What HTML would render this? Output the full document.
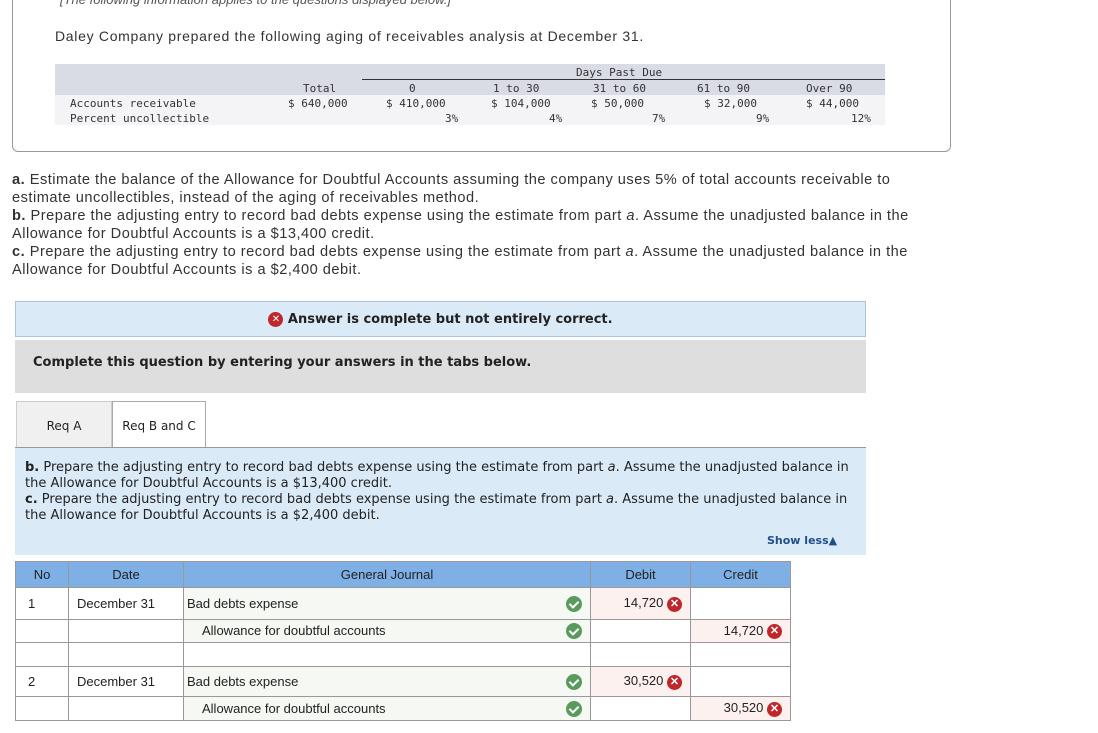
<!DOCTYPE html>
<html><head><style>
body{margin:0;width:1098px;height:733px;background:#fff;position:relative;font-family:"Liberation Sans",sans-serif;color:#222;overflow:hidden}
.abs{position:absolute}
.mono{font-family:"DejaVu Sans Mono","Liberation Mono",monospace;font-size:11px;color:#333}
.dv{font-family:"DejaVu Sans",sans-serif}
.x{display:inline-block;width:15px;height:15px;border-radius:50%;background:#c0272d;color:#fff;font-size:11px;line-height:15px;text-align:center;font-weight:bold;vertical-align:middle}
.ok{display:inline-block;width:16px;height:16px;border-radius:50%;background:#5a9a5c;vertical-align:middle;position:relative}
.ok:after{content:"";position:absolute;left:5px;top:3px;width:4px;height:7px;border:solid #fff;border-width:0 2px 2px 0;transform:rotate(45deg)}
table.j{border-collapse:collapse;font-size:13px;table-layout:fixed}
table.j td{border:1px solid #999;padding:0 8px}
table.j th{border:1px solid #999;background:#7eb0e6;font-weight:normal;font-size:13px;height:25px;padding:0}
.g{background:#f5f8f3}
.p{background:#fdf1f0;text-align:right}
</style></head><body>
<div class="abs" style="left:12px;top:-10px;width:937px;height:160px;border:1px solid #999;border-radius:0 0 6px 6px"></div>
<div class="abs" style="left:60px;top:-8px;font-size:13px;color:#555;font-style:italic">[The following information applies to the questions displayed below.]</div>
<div class="abs" style="left:55px;top:28px;font-size:14px;color:#333;letter-spacing:0.7px">Daley Company prepared the following aging of receivables analysis at December 31.</div>
<div class="abs" style="left:55px;top:64px;width:830px;height:31px;background:#d9dce5"></div>
<div class="abs" style="left:55px;top:95px;width:830px;height:30px;background:#f4f4f6"></div>
<div class="abs" style="left:362px;top:79px;width:523px;height:1px;background:#333"></div>
<div class="abs mono" style="left:576px;top:66px">Days Past Due</div>
<div class="abs mono" style="left:0;top:82px;width:1000px">
<span class="abs" style="left:303px">Total</span><span class="abs" style="left:409px">0</span><span class="abs" style="left:493px">1 to 30</span><span class="abs" style="left:593px">31 to 60</span><span class="abs" style="left:697px">61 to 90</span><span class="abs" style="left:806px">Over 90</span></div>
<div class="abs mono" style="left:0;top:97px;width:1000px">
<span class="abs" style="left:70px">Accounts receivable</span><span class="abs" style="left:288px">$ 640,000</span><span class="abs" style="left:386px">$ 410,000</span><span class="abs" style="left:491px">$ 104,000</span><span class="abs" style="left:591px">$ 50,000</span><span class="abs" style="left:704px">$ 32,000</span><span class="abs" style="left:806px">$ 44,000</span></div>
<div class="abs mono" style="left:0;top:112px;width:1000px">
<span class="abs" style="left:445px">3%</span><span class="abs" style="left:549px">4%</span><span class="abs" style="left:652px">7%</span><span class="abs" style="left:756px">9%</span><span class="abs" style="left:851px">12%</span><span class="abs" style="left:70px">Percent uncollectible</span></div>

<div class="abs" style="left:12px;top:171px;width:1000px;font-size:14.6px;line-height:18px;color:#333;white-space:nowrap;letter-spacing:0.5px"><b>a.</b> Estimate the balance of the Allowance for Doubtful Accounts assuming the company uses 5% of total accounts receivable to<br>estimate uncollectibles, instead of the aging of receivables method.<br><b>b.</b> Prepare the adjusting entry to record bad debts expense using the estimate from part <i>a</i>. Assume the unadjusted balance in the<br>Allowance for Doubtful Accounts is a $13,400 credit.<br><b>c.</b> Prepare the adjusting entry to record bad debts expense using the estimate from part <i>a</i>. Assume the unadjusted balance in the<br>Allowance for Doubtful Accounts is a $2,400 debit.</div>

<div class="abs dv" style="left:15px;top:301px;width:849px;height:34px;background:#dbeaf7;border:1px solid #a9c4e0;font-size:13px;font-weight:bold;line-height:36px;text-align:center;color:#222"><span class="x" style="font-size:10px">✕</span> Answer is complete but not entirely correct.</div>
<div class="abs dv" style="left:15px;top:340px;width:851px;height:53px;background:#dedede;font-size:13px;font-weight:bold;line-height:46px"><span style="padding-left:18px">Complete this question by entering your answers in the tabs below.</span></div>
<div class="abs dv" style="left:16px;top:401px;width:94px;height:46px;background:#f0f0f0;border:1px solid #ccc;border-bottom:none;font-size:12px;line-height:48px;text-align:center">Req A</div>
<div class="abs dv" style="left:112px;top:401px;width:92px;height:47px;background:#fff;border:1px solid #aaa;border-bottom:none;font-size:12px;line-height:48px;text-align:center">Req B and C</div>
<div class="abs" style="left:15px;top:447px;width:851px;height:1px;background:#999"></div>
<div class="abs" style="left:15px;top:448px;width:851px;height:107px;background:#dbeaf7"></div>
<div class="abs dv" style="left:25px;top:460px;width:835px;font-size:13px;line-height:16px;color:#222"><b>b.</b> Prepare the adjusting entry to record bad debts expense using the estimate from part <i>a</i>. Assume the unadjusted balance in the Allowance for Doubtful Accounts is a $13,400 credit.<br><b>c.</b> Prepare the adjusting entry to record bad debts expense using the estimate from part <i>a</i>. Assume the unadjusted balance in the Allowance for Doubtful Accounts is a $2,400 debit.</div>
<div class="abs dv" style="left:767px;top:534px;font-size:11px;font-weight:bold;color:#1f4e8a">Show less▲</div>

<table class="j abs" style="left:15px;top:561px;width:776px">
<colgroup><col style="width:53px"><col style="width:115px"><col style="width:407px"><col style="width:100px"><col style="width:100px"></colgroup>
<tr><th>No</th><th>Date</th><th>General Journal</th><th>Debit</th><th>Credit</th></tr>
<tr style="height:32px"><td style="padding-left:12px">1</td><td>December 31</td><td class="g" style="padding-left:3px">Bad debts expense<span class="ok" style="float:right"></span></td><td class="p">14,720 <span class="x">✕</span></td><td></td></tr>
<tr style="height:23px"><td></td><td></td><td class="g" style="padding-left:18px">Allowance for doubtful accounts<span class="ok" style="float:right"></span></td><td></td><td class="p">14,720 <span class="x">✕</span></td></tr>
<tr style="height:24px"><td></td><td></td><td></td><td></td><td></td></tr>
<tr style="height:30px"><td style="padding-left:12px">2</td><td>December 31</td><td class="g" style="padding-left:3px">Bad debts expense<span class="ok" style="float:right"></span></td><td class="p">30,520 <span class="x">✕</span></td><td></td></tr>
<tr style="height:24px"><td></td><td></td><td class="g" style="padding-left:18px">Allowance for doubtful accounts<span class="ok" style="float:right"></span></td><td></td><td class="p">30,520 <span class="x">✕</span></td></tr>
</table>
</body></html>
